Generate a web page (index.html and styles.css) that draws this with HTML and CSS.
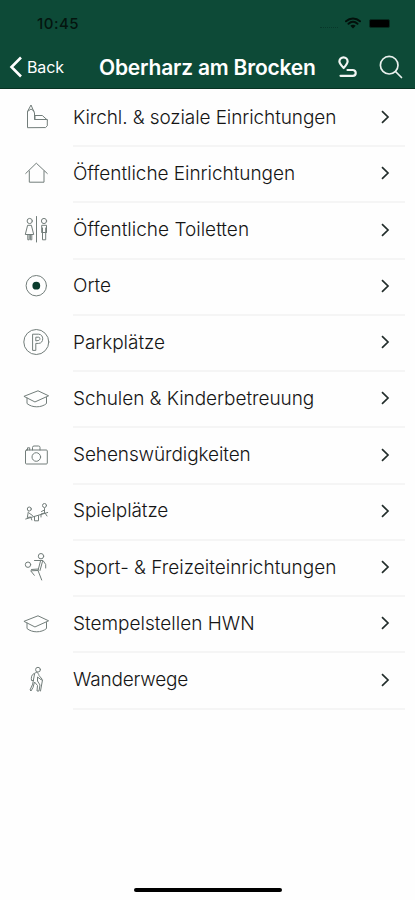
FILE: index.html
```html
<!DOCTYPE html>
<html lang="de">
<head>
<meta charset="utf-8">
<title>Oberharz am Brocken</title>
<link rel="stylesheet" href="styles.css">
</head>
<body>
<svg class="defs" width="0" height="0">
<symbol id="chevron" viewBox="0 0 12 16"><path d="M2 2.200 8 8 2 13.800"/></symbol>
<symbol id="cap" viewBox="0 0 32 32"><path d="M4.300 14.200 18 8.800 28.600 13.800 15.300 19.800ZM7 16v5.500c5 4.400 14.500 4.400 19.500 0V15.500"/></symbol>
</svg>
<header class="header">
  <div class="status">
    <span class="time">10:45</span>
    <span class="dots"></span>
    <svg class="wifi" width="16" height="12" viewBox="0 0 16 12"><path d="M1 4.300C5 .5 11 .5 15 4.300M3.500 6.700c2.700-2.500 6.300-2.500 9 0"/><path class="fill" d="M5.300 8.800c1.600-1.400 3.800-1.400 5.400 0L8 11.500Z"/></svg>
    <span class="battery"></span>
  </div>
  <nav class="nav">
    <svg class="back-icon" width="14" height="22" viewBox="0 0 14 22"><path d="M12 1.500 2.500 11l9.500 9.500"/></svg>
    <span class="back">Back</span>
    <h1 class="title">Oberharz am Brocken</h1>
    <svg class="route" width="20" height="22" viewBox="0 0 20 22"><path d="M6.600 12C4 9 2.400 7.300 2.400 5.400a4.100 4.100 0 0 1 8.200 0c0 1.900-1.400 3.600-4 6.600ZM10.500 14h5.300a2.900 2.900 0 0 1 0 5.800H3.500"/></svg>
    <svg class="search" width="24" height="24" viewBox="0 0 24 24"><circle cx="10.200" cy="10.200" r="8.800"/><path d="m16.500 16.500 6 6"/></svg>
  </nav>
</header>
<main class="list">
  <div class="row"><svg class="icon" viewBox="0 0 32 32"><path d="M7.500 26.300V10.500L11 4l3.500 8v6.500h12.800v6.300l-1.500 1.500ZM7.500 10.500 11 8l3 2M15 18.500v-4h7.300l5 4.500"/></svg><div class="cell"><span class="label tight">Kirchl. &amp; soziale Einrichtungen</span><svg class="chevron"><use href="#chevron"/></svg></div></div>
  <div class="row"><svg class="icon" viewBox="0 0 32 32"><path d="M5.700 16.500 16.300 6.200l11 10.300M9.300 14v11.200H24V14"/></svg><div class="cell"><span class="label snug">Öffentliche Einrichtungen</span><svg class="chevron"><use href="#chevron"/></svg></div></div>
  <div class="row"><svg class="icon" viewBox="0 0 32 32"><circle cx="9.700" cy="7" r="2.600"/><circle cx="24" cy="7" r="2.600"/><path d="M16.500 2.500v25.500M8 11.300h3.400l2.300 9.200H5.700ZM7.800 20.500v5.300h1.400v-5M11.800 20.500v5.300h-1.400v-5M21.700 18.500v-7.200h4.800v7.200M22.500 14v11.800h3.200V14M22.500 18.500h3"/></svg><div class="cell"><span class="label">Öffentliche Toiletten</span><svg class="chevron"><use href="#chevron"/></svg></div></div>
  <div class="row"><svg class="icon" viewBox="0 0 32 32"><circle cx="16.300" cy="15.700" r="10.200"/><circle class="dot" cx="16.300" cy="15.700" r="3.900"/></svg><div class="cell"><span class="label">Orte</span><svg class="chevron"><use href="#chevron"/></svg></div></div>
  <div class="row"><svg class="icon" viewBox="0 0 32 32"><circle cx="16.300" cy="16" r="12.500"/><path d="M12.600 24V8.200h6c5.500 0 5.500 9.200 0 9.200h-2.800V24ZM15.800 14.500v-3.300h2.800c1.800 0 1.800 3.300 0 3.300Z"/></svg><div class="cell"><span class="label snug">Parkplätze</span><svg class="chevron"><use href="#chevron"/></svg></div></div>
  <div class="row"><svg class="icon"><use href="#cap"/></svg><div class="cell"><span class="label snug">Schulen &amp; Kinderbetreuung</span><svg class="chevron"><use href="#chevron"/></svg></div></div>
  <div class="row"><svg class="icon" viewBox="0 0 32 32"><rect x="5.500" y="11" width="21.800" height="14" rx="1"/><path d="M12.500 11V8.500q0-1.500 1.500-1.500h4.500q1.500 0 1.500 1.500V11M7.500 11V8.800h2.200V11"/><circle cx="16.300" cy="18" r="4.300"/></svg><div class="cell"><span class="label tight">Sehenswürdigkeiten</span><svg class="chevron"><use href="#chevron"/></svg></div></div>
  <div class="row"><svg class="icon" viewBox="0 0 32 32"><circle cx="9.300" cy="14" r="2"/><circle cx="24.500" cy="10.500" r="2"/><path d="m8.300 17-1 5.500 3.500-.5 1 3M9 18l3.500 2.500M5.700 24l22-6.500M24.500 13.500v4.500l-3.500 1v3M24.500 15l-3 1.500M25 18l2 3M14.500 21.500v4.300h4v-5"/></svg><div class="cell"><span class="label tight">Spielplätze</span><svg class="chevron"><use href="#chevron"/></svg></div></div>
  <div class="row"><svg class="icon" viewBox="0 0 32 32"><circle cx="8" cy="13.700" r="2.700"/><circle cx="21" cy="5.200" r="2.700"/><path d="M14.500 9.500H23l2.700 4v3.500M20.500 10 18 19.500l3.700 9.500M22.500 10.500l-2.500 9M18 19.500l-7.300.3 3.600 4.500M18.500 18l-7 .5"/></svg><div class="cell"><span class="label">Sport- &amp; Freizeiteinrichtungen</span><svg class="chevron"><use href="#chevron"/></svg></div></div>
  <div class="row"><svg class="icon"><use href="#cap"/></svg><div class="cell"><span class="label">Stempelstellen HWN</span><svg class="chevron"><use href="#chevron"/></svg></div></div>
  <div class="row"><svg class="icon" viewBox="0 0 32 32"><circle cx="18" cy="5.700" r="2.400"/><path d="M15 9c2-1.500 3.500 0 4 2.500l3 3.500-.5 1-4-3v4l2.500 4-1 6h-2l.5-5.500-3-3.500-1.500 5.500-2 3.500-1-1 2.500-5.500ZM14 9.500c-2.500 1-3 4-2.500 7h2M22.500 16l-2 11"/></svg><div class="cell"><span class="label tighter">Wanderwege</span><svg class="chevron"><use href="#chevron"/></svg></div></div>
</main>
<footer class="home"><div class="home-bar"></div></footer>
</body>
</html>
```
FILE: styles.css
```css
* { box-sizing: border-box; }
body {
  margin: 0;
  width: 415px;
  height: 900px;
  display: flex;
  flex-direction: column;
  background: #fefefe;
  font-family: Inter, "Liberation Sans", sans-serif;
  color: #151515;
  overflow: hidden;
}
.defs { position: absolute; }
svg { flex: none; fill: none; stroke-linecap: round; stroke-linejoin: round; }
.header { height: 89px; background: #0d4a37; border-bottom: 1px solid #073322; flex: none; }
.status { height: 46px; display: flex; align-items: center; padding-left: 37px; color: #04150f; }
.time { width: 283px; padding-top: 1px; font-size: 15px; font-weight: 500; letter-spacing: .5px; line-height: 46px; }
.dots { width: 18px; height: 2px; margin: 8px 7px 0 0; border-bottom: 1px dotted #07382a; }
.wifi { stroke: #03100b; stroke-width: 2; }
.wifi .fill { fill: #03100b; stroke: none; }
.battery { width: 21px; height: 9px; margin-left: 8px; background: #000; border: 1px solid #062a1e; border-radius: 2px; }
.nav { height: 42px; display: flex; align-items: center; padding-left: 9px; color: #fff; }
.back-icon { stroke: #fff; stroke-width: 2.6; stroke-linecap: butt; stroke-linejoin: miter; }
.back { width: 72px; margin-left: 4px; font-size: 16px; letter-spacing: -.1px; white-space: nowrap; }
.title { width: 238px; margin: 0; font-size: 21px; font-weight: 600; letter-spacing: -.2px; white-space: nowrap; }
.route { stroke: #f2f5f3; stroke-width: 2.2; }
.search { margin-left: 22px; stroke: #e9f0ed; stroke-width: 1.7; }
.list { flex: none; }
.row { height: 56.25px; display: flex; align-items: center; padding: 0 10px 0 20px; }
.icon { width: 32px; height: 32px; stroke: #727d7a; stroke-width: 1; }
.icon .dot { fill: #0b3c2d; stroke: none; }
.cell { flex: 1; height: 58px; margin: 1px 0 -1px 21px; display: flex; align-items: center; justify-content: space-between; border-bottom: 2px solid #f5f5f5; }
.label { font-size: 19px; font-weight: 300; white-space: nowrap; }
.snug { letter-spacing: -.05px; }
.tight { letter-spacing: -.1px; }
.tighter { letter-spacing: -.2px; }
.chevron { width: 12px; height: 16px; margin-right: 13px; stroke: #222d2b; stroke-width: 1.7; stroke-linecap: butt; stroke-linejoin: miter; }
.home { margin-top: auto; height: 12px; display: flex; justify-content: center; }
.home-bar { width: 148px; height: 4px; border-radius: 2px; background: #000; }
```
